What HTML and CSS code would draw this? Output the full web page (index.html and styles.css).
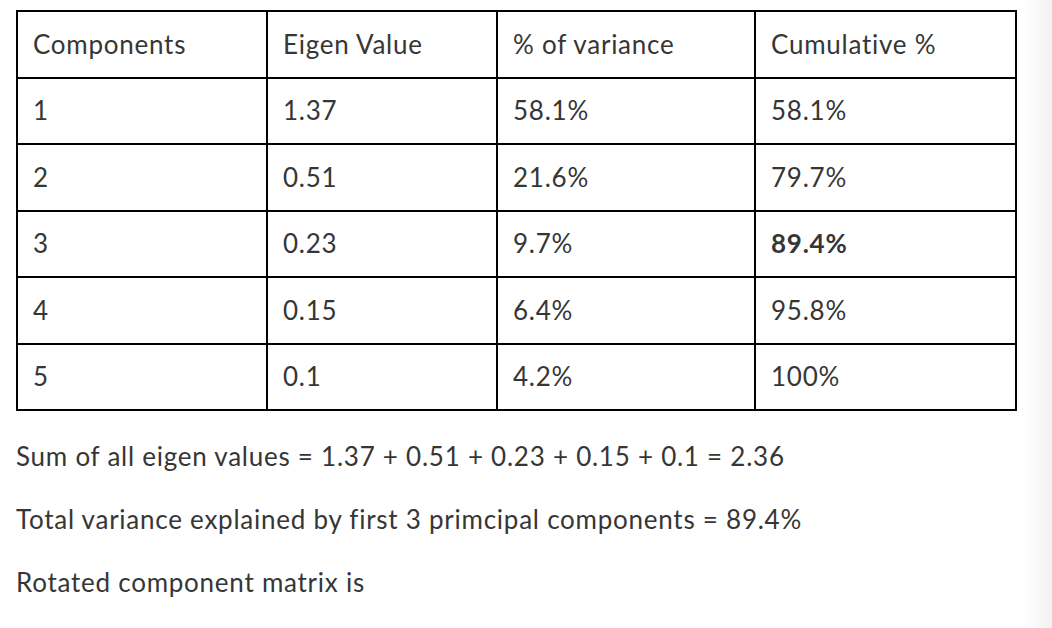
FILE: index.html
```html
<!DOCTYPE html>
<html>
<head>
<meta charset="utf-8">
<link rel="stylesheet" href="styles.css">
</head>
<body>
<div class="page">
  <table class="eigen">
    <colgroup>
      <col class="c1"><col class="c2"><col class="c3"><col class="c4">
    </colgroup>
    <tr><td>Components</td><td>Eigen Value</td><td>% of variance</td><td>Cumulative %</td></tr>
    <tr><td>1</td><td>1.37</td><td>58.1%</td><td>58.1%</td></tr>
    <tr><td>2</td><td>0.51</td><td>21.6%</td><td>79.7%</td></tr>
    <tr><td>3</td><td>0.23</td><td>9.7%</td><td><strong>89.4%</strong></td></tr>
    <tr><td>4</td><td>0.15</td><td>6.4%</td><td>95.8%</td></tr>
    <tr><td>5</td><td>0.1</td><td>4.2%</td><td>100%</td></tr>
  </table>
  <p class="line">Sum of all eigen values = 1.37 + 0.51 + 0.23 + 0.15 + 0.1 = 2.36</p>
  <p class="line">Total variance explained by first 3 primcipal components = 89.4%</p>
  <p class="line">Rotated component matrix is</p>
</div>
<div class="edge"></div>
</body>
</html>
```
FILE: styles.css
```css
html, body {
  margin: 0;
  padding: 0;
  background: #fff;
}
body {
  font-family: Lato, "Open Sans", sans-serif;
  color: #363636;
  font-size: 26px;
  letter-spacing: 0.75px;
}
.page {
  padding: 10px 16px 0 16px;
}
.edge {
  position: fixed;
  top: 0;
  right: 0;
  width: 30px;
  height: 100%;
  background: linear-gradient(to right, #ffffff, #f2f2f2);
}
.eigen {
  border-collapse: collapse;
  width: 999px;
  table-layout: fixed;
}
.c1 { width: 250px; }
.c2 { width: 230px; }
.c3 { width: 258px; }
.c4 { width: 261px; }
.eigen td {
  border: 2px solid #000;
  height: 64.5px;
  padding: 0 15px;
  vertical-align: middle;
  line-height: 1.2;
}
.eigen strong { font-weight: 700; }
.line {
  margin: 0;
  line-height: 63px;
  padding-top: 14px;
}
.line + .line { padding-top: 0; }
```
